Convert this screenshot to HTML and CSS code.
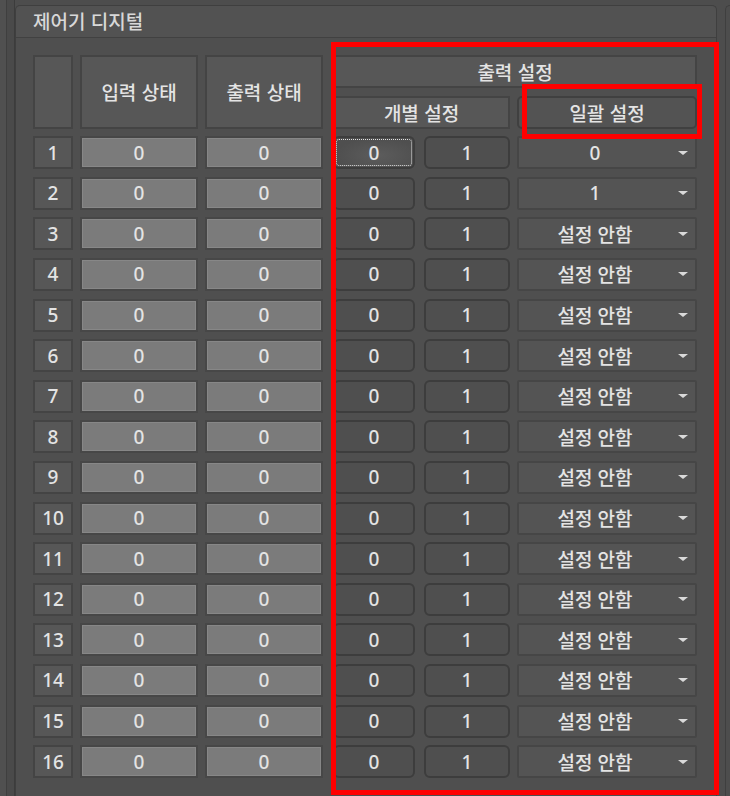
FILE: index.html
```html
<!DOCTYPE html>
<html lang="ko">
<head>
    <meta charset="UTF-8">
    <title>제어기 디지털</title>
<link rel="stylesheet" href="styles.css">
</head>
<body>
    <div class="window">
        <div class="side"></div>
        <div class="group">
            <div class="group-title">제어기 디지털</div>
            <div class="group-body">
                <div class="io-grid">
                    <div class="hdr hdr-no"></div>
                    <div class="hdr hdr-in">입력 상태</div>
                    <div class="hdr hdr-out">출력 상태</div>
                    <div class="hdr hdr-set">출력 설정</div>
                    <div class="hdr hdr-each">개별 설정</div>
                    <div class="hdr hdr-all">일괄 설정</div>

                    <div class="num">1</div><div class="val">0</div><div class="val out">0</div><div class="btn zero focus">0</div><div class="btn">1</div><div class="combo"><span>0</span><i></i></div>
                    <div class="num">2</div><div class="val">0</div><div class="val out">0</div><div class="btn zero">0</div><div class="btn">1</div><div class="combo"><span>1</span><i></i></div>
                    <div class="num">3</div><div class="val">0</div><div class="val out">0</div><div class="btn zero">0</div><div class="btn">1</div><div class="combo"><span>설정 안함</span><i></i></div>
                    <div class="num">4</div><div class="val">0</div><div class="val out">0</div><div class="btn zero">0</div><div class="btn">1</div><div class="combo"><span>설정 안함</span><i></i></div>
                    <div class="num">5</div><div class="val">0</div><div class="val out">0</div><div class="btn zero">0</div><div class="btn">1</div><div class="combo"><span>설정 안함</span><i></i></div>
                    <div class="num">6</div><div class="val">0</div><div class="val out">0</div><div class="btn zero">0</div><div class="btn">1</div><div class="combo"><span>설정 안함</span><i></i></div>
                    <div class="num">7</div><div class="val">0</div><div class="val out">0</div><div class="btn zero">0</div><div class="btn">1</div><div class="combo"><span>설정 안함</span><i></i></div>
                    <div class="num">8</div><div class="val">0</div><div class="val out">0</div><div class="btn zero">0</div><div class="btn">1</div><div class="combo"><span>설정 안함</span><i></i></div>
                    <div class="num">9</div><div class="val">0</div><div class="val out">0</div><div class="btn zero">0</div><div class="btn">1</div><div class="combo"><span>설정 안함</span><i></i></div>
                    <div class="num">10</div><div class="val">0</div><div class="val out">0</div><div class="btn zero">0</div><div class="btn">1</div><div class="combo"><span>설정 안함</span><i></i></div>
                    <div class="num">11</div><div class="val">0</div><div class="val out">0</div><div class="btn zero">0</div><div class="btn">1</div><div class="combo"><span>설정 안함</span><i></i></div>
                    <div class="num">12</div><div class="val">0</div><div class="val out">0</div><div class="btn zero">0</div><div class="btn">1</div><div class="combo"><span>설정 안함</span><i></i></div>
                    <div class="num">13</div><div class="val">0</div><div class="val out">0</div><div class="btn zero">0</div><div class="btn">1</div><div class="combo"><span>설정 안함</span><i></i></div>
                    <div class="num">14</div><div class="val">0</div><div class="val out">0</div><div class="btn zero">0</div><div class="btn">1</div><div class="combo"><span>설정 안함</span><i></i></div>
                    <div class="num">15</div><div class="val">0</div><div class="val out">0</div><div class="btn zero">0</div><div class="btn">1</div><div class="combo"><span>설정 안함</span><i></i></div>
                    <div class="num">16</div><div class="val">0</div><div class="val out">0</div><div class="btn zero">0</div><div class="btn">1</div><div class="combo"><span>설정 안함</span><i></i></div>
                </div>
            </div>
        </div>
        <div class="next-panel"></div>
    </div>

    <!-- 강조 표시 (빨간 박스) -->
    <div class="mark mark-outer"></div>
    <div class="mark mark-inner"></div>
</body>
</html>
```

FILE: styles.css
```css
body {
    margin: 0;
    background-color: #4d4d4d;
    font-family: "Noto Sans", "Noto Sans CJK KR", sans-serif;
    font-weight: 500;
    color: #e4e4e4;
    overflow: hidden;
}
.window {
    display: flex;
    height: 796px;
}
.side {
    width: 14px;
    flex: none;
    background: linear-gradient(to right, #505050 0 6px, #3f3f3f 6px 7px, #4a4a4a 7px);
    border-right: 1px solid #3c3c3c;
}
.group {
    width: 702px;
    flex: none;
    box-sizing: border-box;
    margin-top: 5px;
    border: 1px solid #3f3f3f;
    border-bottom: none;
    border-radius: 5px 5px 0 0;
    background-color: #4f4f4f;
}
.group-title {
    height: 31px;
    padding-left: 17px;
    border-bottom: 1px solid #414141;
    background-color: #525252;
    font-family: "Noto Sans CJK KR", sans-serif;
    font-size: 19px;
    line-height: 29px;
    color: #d8d8d8;
    border-radius: 5px 5px 0 0;
}
.group-body {
    padding: 17px 0 0 17px;
}
.io-grid {
    display: grid;
    grid-template-columns: 40px 118px 121px 84px 86px 180px;
    grid-template-rows: repeat(18, 33px);
    column-gap: 7px;
    row-gap: 7.6px;
    font-size: 19px;
}
.io-grid > div {
    box-sizing: border-box;
    display: flex;
    align-items: center;
    justify-content: center;
}
.hdr {
    background-color: #575757;
    border: 2px solid #444444;
    font-family: "Noto Sans CJK KR", sans-serif;
    font-size: 19px;
}
.hdr-no { grid-row: 1 / 3; grid-column: 1; }
.hdr-in { grid-row: 1 / 3; grid-column: 2; }
.hdr-out { grid-row: 1 / 3; grid-column: 3; width: 118px; }
.hdr-set { grid-row: 1; grid-column: 4 / 7; }
.hdr-each { grid-row: 2; grid-column: 4 / 6; }
.hdr-all {
    grid-row: 2;
    grid-column: 6;
    border-color: #404040;
    border-radius: 5px;
    background-color: #535353;
}
.num {
    background-color: #575757;
    border: 2px solid #444444;
}
.val {
    background-color: #7b7b7b;
    border: 2px solid #474747;
    box-shadow: inset 0 0 0 1px #878787;
}
.val.out {
    width: 118px;
}
.btn {
    background-color: #4f4f4f;
    border: 2px solid #3d3d3d;
    border-radius: 6px;
}
.btn.zero {
    width: 82px;
}
.btn.focus {
    outline: 1px dotted #e0e0e0;
    outline-offset: -4px;
    background: radial-gradient(ellipse at 55% 60%, #5c5c5c, #4f4f4f 70%);
}
.combo {
    background-color: #545454;
    border: 2px solid #464646;
    border-radius: 2px;
}
.combo span {
    flex: 1;
    text-align: center;
    font-family: "Noto Sans", "Noto Sans CJK KR", sans-serif;
}
.combo i {
    width: 0;
    height: 0;
    margin: 0 7px 0 7px;
    border-left: 5px solid transparent;
    border-right: 5px solid transparent;
    border-top: 4px solid #dadada;
}
.next-panel {
    flex: none;
    width: 6px;
    margin: 5px 0 0 8px;
    border: 1px solid #3f3f3f;
    border-right: none;
    border-bottom: none;
    border-radius: 5px 0 0 0;
}
.mark {
    position: absolute;
    box-sizing: border-box;
    border: 5px solid #ff0000;
}
.mark-outer {
    left: 331px;
    top: 42px;
    width: 388px;
    height: 753px;
}
.mark-inner {
    left: 522px;
    top: 84px;
    width: 180px;
    height: 55px;
}
```
